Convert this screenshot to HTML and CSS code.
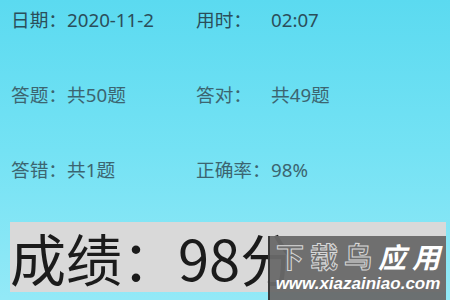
FILE: index.html
```html
<!DOCTYPE html>
<html lang="zh-CN">
<head>
<meta charset="utf-8">
<title>成绩</title>
<link rel="stylesheet" href="styles.css">
</head>
<body>
<div class="page">
  <div class="stats">
    <div class="row first">
      <div class="cell left"><span class="lbl">日期：</span><span>2020-11-2</span></div>
      <div class="cell right"><span class="lbl wide">用时：</span><span>02:07</span></div>
    </div>
    <div class="row">
      <div class="cell left"><span class="lbl">答题：</span><span>共50题</span></div>
      <div class="cell right"><span class="lbl wide">答对：</span><span>共49题</span></div>
    </div>
    <div class="row">
      <div class="cell left"><span class="lbl">答错：</span><span>共1题</span></div>
      <div class="cell right"><span class="lbl wide">正确率：</span><span>98%</span></div>
    </div>
  </div>
  <div class="score">成绩：98分</div>
  <div class="watermark">
    <div class="wm-title"><span class="wm-gray">下载乌</span><span class="wm-white">应用</span></div>
    <div class="wm-url">www.xiazainiao.com</div>
  </div>
</div>
</body>
</html>
```
FILE: styles.css
```css
html, body {
  margin: 0;
  padding: 0;
}
body {
  width: 450px;
  height: 300px;
  overflow: hidden;
  background: linear-gradient(180deg, #5bdaf0 0%, #74e2f4 50%, #93e9f7 100%);
  font-family: "Noto Sans", "Noto Sans CJK SC", sans-serif;
}
.page {
  position: relative;
  width: 450px;
  height: 300px;
}
.stats {
  display: flex;
  flex-direction: column;
  gap: 49px;
  padding: 7px 0 0 11px;
}
.row {
  display: flex;
  height: 26px;
  line-height: 26px;
  font-size: 18.7px;
  color: #3c6570;
}
.row.first {
  color: #2b4e5a;
}
.cell {
  display: flex;
  white-space: nowrap;
}
.cell.left {
  width: 185px;
}
.lbl.wide {
  width: 75px;
}
.score {
  margin: 39px 0 0 10px;
  width: 436px;
  height: 70px;
  line-height: 70px;
  background: #d9d9d9;
  font-family: "Noto Sans CJK SC", sans-serif;
  font-size: 56px;
  color: #1b1b1b;
  white-space: nowrap;
  overflow: hidden;
}
.watermark {
  position: absolute;
  left: 268px;
  top: 236px;
  width: 178px;
  height: 64px;
  background: rgba(105, 105, 105, 0.95);
  border-left: 2px solid #3a3a3a;
  box-sizing: border-box;
  display: flex;
  flex-direction: column;
  align-items: center;
}
.wm-title {
  font-family: "Noto Sans CJK SC", sans-serif;
  font-weight: 700;
  font-size: 28px;
  line-height: 36px;
  letter-spacing: 6px;
  margin-right: -6px;
  white-space: nowrap;
  margin-top: 2px;
}
.wm-gray {
  color: #6e6e6e;
  -webkit-text-stroke: 1px #d8d8d8;
}
.wm-white {
  color: #ffffff;
  font-style: italic;
}
.wm-url {
  font-family: "Liberation Sans", sans-serif;
  font-weight: 700;
  font-style: italic;
  font-size: 17px;
  line-height: 20px;
  color: #ffffff;
  white-space: nowrap;
}
```
